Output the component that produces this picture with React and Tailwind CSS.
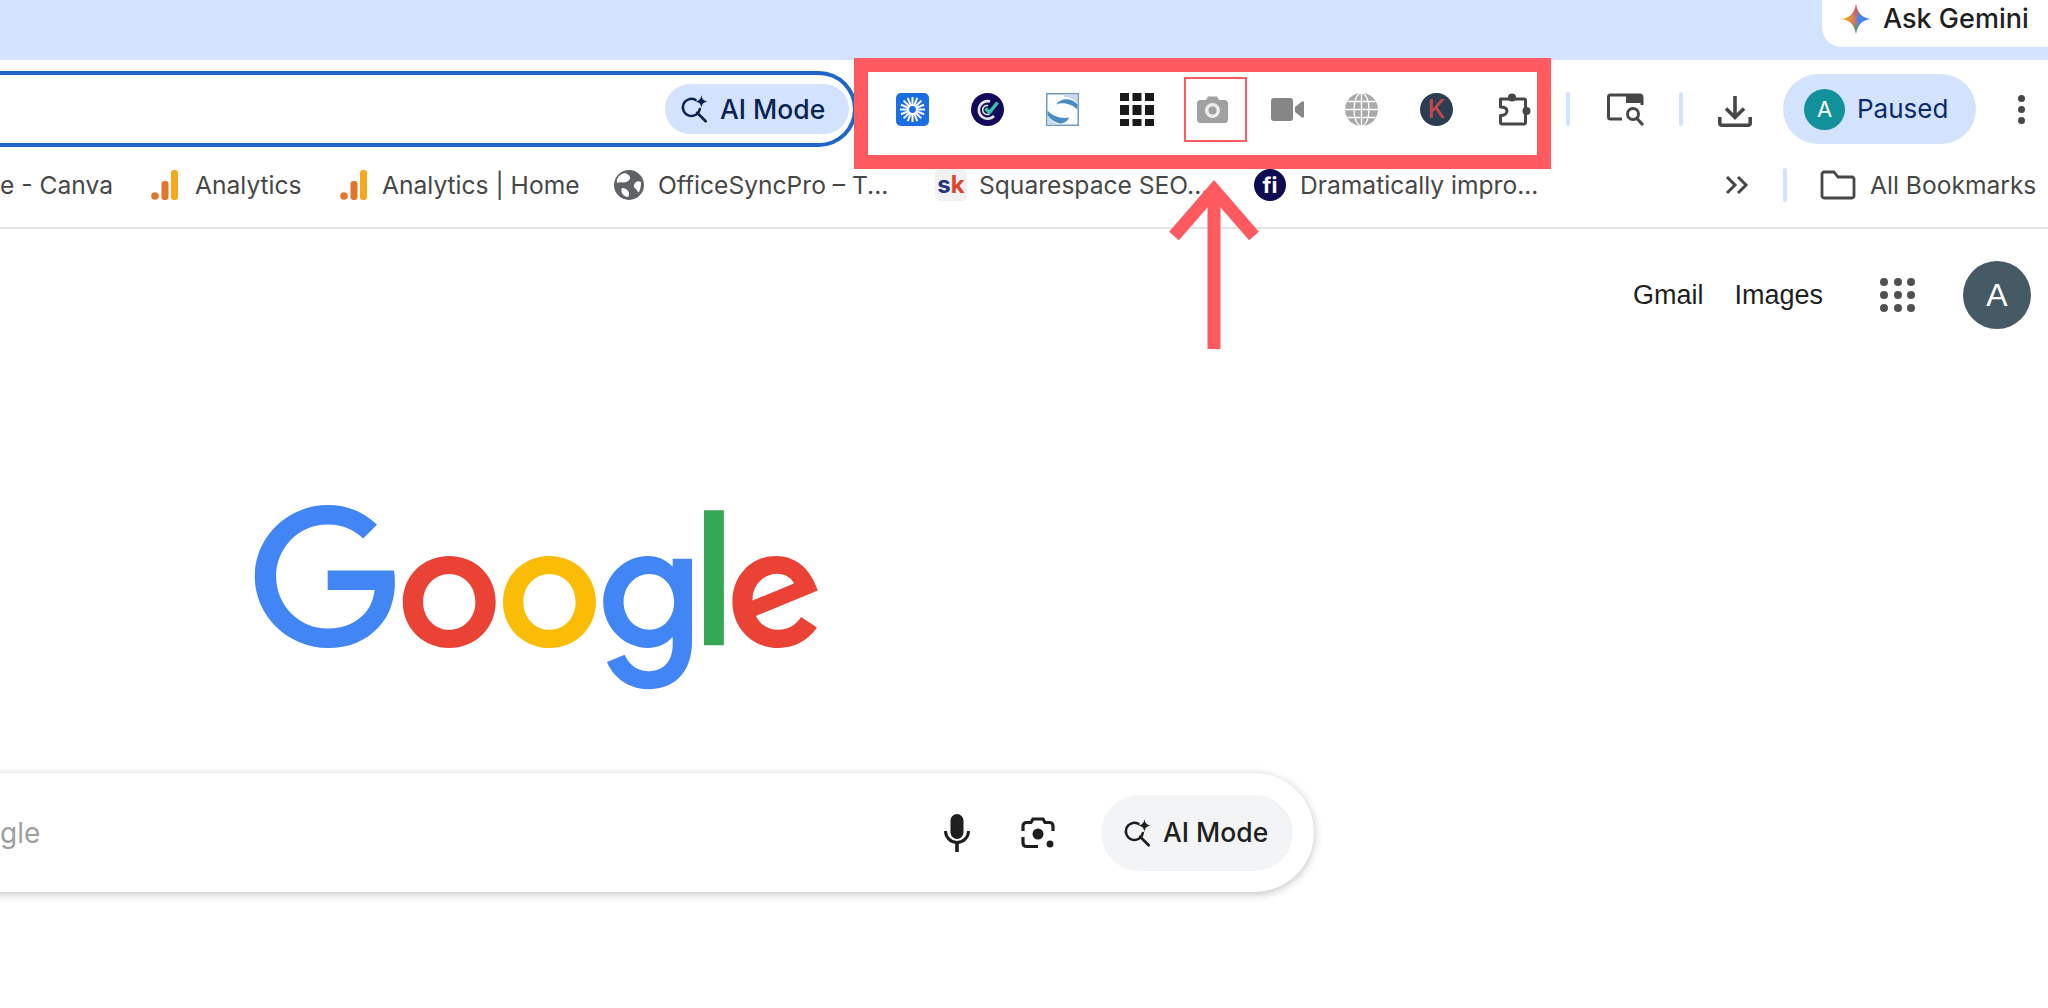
const FONT = "font-['Inter','Liberation_Sans',sans-serif]";

function Sep({ className = "" }) {
  return <div className={`h-[34px] w-[4px] shrink-0 rounded-full bg-[#d3e3fd] ${className}`} />;
}

function GeminiStar() {
  return (
    <svg width="32" height="32" viewBox="0 0 32 32">
      <defs>
        <clipPath id="gemClip">
          <path d="M16 1C16.800 9.500 22.500 15.200 31 16C22.500 16.800 16.800 22.500 16 31C15.200 22.500 9.500 16.800 1 16C9.500 15.200 15.200 9.500 16 1Z" />
        </clipPath>
        <linearGradient id="gemH" x1="0" y1="0" x2="1" y2="0">
          <stop offset="0.1" stopColor="#f5b400" />
          <stop offset="0.45" stopColor="#d9785a" />
          <stop offset="0.6" stopColor="#4285f4" />
        </linearGradient>
        <linearGradient id="gemV" x1="0" y1="0" x2="0" y2="1">
          <stop offset="0.1" stopColor="#e8453c" />
          <stop offset="0.42" stopColor="#e8453c" stopOpacity="0" />
          <stop offset="0.6" stopColor="#34a853" stopOpacity="0" />
          <stop offset="0.9" stopColor="#34a853" />
        </linearGradient>
      </defs>
      <g clipPath="url(#gemClip)">
        <rect width="32" height="32" fill="url(#gemH)" />
        <rect x="10" width="12" height="32" fill="url(#gemV)" />
      </g>
    </svg>
  );
}

function AiSearchIcon({ color, size = 30 }) {
  return (
    <svg width={size} height={size} viewBox="0 0 28 28" fill="none">
      <path d="M14.500 5.500A8 8 0 1 0 18.500 14" stroke={color} strokeWidth="2.300" strokeLinecap="round" />
      <path d="M16 17.500L24 25.500" stroke={color} strokeWidth="2.500" strokeLinecap="round" />
      <path d="M20 1C20.600 5 22 6.400 26 7C22 7.600 20.600 9 20 13C19.400 9 18 7.600 14 7C18 6.400 19.400 5 20 1Z" fill={color} />
    </svg>
  );
}

function Sunburst() {
  const rays = Array.from({ length: 16 }).map((_, i) => (i * 360) / 16);
  return (
    <svg width="33" height="33" viewBox="0 0 33 33">
      <rect width="33" height="33" rx="5" fill="#1a6ee3" />
      {rays.map((a) => (
        <rect key={a} x="15.500" y="4" width="2" height="9" fill="#fff" transform={`rotate(${a} 16.500 16.500)`} />
      ))}
      <circle cx="16.500" cy="16.500" r="5.500" fill="#fff" />
      <circle cx="16.500" cy="16.500" r="3.400" fill="#1a6ee3" />
    </svg>
  );
}

function CheckBadge() {
  return (
    <svg width="33" height="33" viewBox="0 0 33 33" fill="none">
      <circle cx="16.500" cy="16.500" r="16.500" fill="#140a5c" />
      <path d="M19 8.500A8.800 8.800 0 1 0 23 23" stroke="#e8e6f2" strokeWidth="2.600" />
      <path d="M17 12.500A4.500 4.500 0 1 0 18 21" stroke="#e8e6f2" strokeWidth="1.500" />
      <path d="M14.500 15.500L18.500 19.500L26.500 9.500" stroke="#35c4a8" strokeWidth="3.500" />
    </svg>
  );
}

function SLogo() {
  return (
    <svg width="33" height="33" viewBox="0 0 33 33" fill="none">
      <rect x="0.750" y="0.750" width="31.500" height="31.500" fill="#fff" stroke="#6f9bc4" strokeWidth="1.500" />
      <path d="M18 1.500H31.500V11C28 6 23 3.500 18 4Z" fill="#c7d9ea" />
      <path d="M1.500 23C4 27 8 30 13 31.500H1.500Z" fill="#c7d9ea" />
      <path d="M10 11.500C14 5.500 25 3.500 31.500 11.500V16.500C26 11 17 8.500 10 11.500Z" fill="#4a8bc6" />
      <path d="M1.500 17.500C7 23.500 15 26 23 24.500C22 28 18 30.500 14 30.500C9 29.500 4 26 1.500 22Z" fill="#4a8bc6" />
    </svg>
  );
}

function GridIcon() {
  return (
    <svg width="34" height="33" viewBox="0 0 34 33" fill="#1a1a1a">
      {[0, 12.500, 25].map((x) => (
        <g key={x}>
          <rect x={x} y="0" width="9" height="8" />
          <rect x={x} y="12" width="9" height="10" />
          <rect x={x} y="26" width="9" height="7" />
        </g>
      ))}
    </svg>
  );
}

function CameraIcon() {
  return (
    <svg width="31" height="28" viewBox="0 0 31 28">
      <path d="M3 5H9L11 1.500H20L22 5H28C29.500 5 31 6.500 31 8V25C31 26.500 29.500 28 28 28H3C1.500 28 0 26.500 0 25V8C0 6.500 1.500 5 3 5Z" fill="#a0a0a0" />
      <circle cx="15.500" cy="15.500" r="7.500" fill="#ececec" />
      <circle cx="15.500" cy="15.500" r="4" fill="#a0a0a0" />
    </svg>
  );
}

function VideoIcon() {
  return (
    <svg width="33" height="23" viewBox="0 0 33 23" fill="#868686">
      <rect width="22" height="23" rx="3" />
      <path d="M24 9L31 3.500C32 3 33 3.500 33 4.500V18.500C33 19.500 32 20 31 19.500L24 14Z" />
    </svg>
  );
}

function GlobeIcon() {
  return (
    <svg width="33" height="33" viewBox="0 0 33 33" fill="none">
      <circle cx="16.500" cy="16.500" r="16.500" fill="#a9a9a9" />
      <g stroke="#fff" strokeWidth="1.300">
        <ellipse cx="16.500" cy="16.500" rx="7.500" ry="16.500" />
        <path d="M16.500 0V33M0 16.500H33M2.500 8.500H30.500M2.500 24.500H30.500" />
      </g>
    </svg>
  );
}

function PuzzleIcon() {
  return (
    <svg width="34" height="33" viewBox="0 0 34 33" fill="none">
      <circle cx="15" cy="4.500" r="4" fill="#474747" />
      <circle cx="29.500" cy="18" r="4" fill="#474747" />
      <path
        d="M3.500 6H27C28 6 28.500 6.500 28.500 7.500V29.500C28.500 30.500 28 31 27 31H5C4 31 3.500 30.500 3.500 29.500V22.500C8 22.500 10 20 10 18C10 15.500 8 14 3.500 14Z"
        stroke="#474747"
        strokeWidth="3"
        strokeLinejoin="round"
      />
    </svg>
  );
}

function TabSearchIcon() {
  return (
    <svg width="37" height="33" viewBox="0 0 37 33" fill="none">
      <path d="M15 26H3.500C2 26 1.500 25 1.500 24V4C1.500 3 2 2 3.500 2H33C34 2 35 3 35 4V12" stroke="#474747" strokeWidth="3" />
      <rect x="19" y="1" width="16" height="9" fill="#474747" />
      <circle cx="26" cy="21" r="5.500" stroke="#474747" strokeWidth="3" />
      <path d="M30 25.500L35 31" stroke="#474747" strokeWidth="3.200" strokeLinecap="round" />
    </svg>
  );
}

function DownloadIcon() {
  return (
    <svg width="34" height="31" viewBox="0 0 34 31" fill="none">
      <path d="M17 0V20M8 12.500L17 21.500L26 12.500" stroke="#474747" strokeWidth="3.600" />
      <path d="M1.800 21V27C1.800 28.500 2.500 29.200 4 29.200H30C31.500 29.200 32.200 28.500 32.200 27V21" stroke="#474747" strokeWidth="3.600" />
    </svg>
  );
}

function AnalyticsIcon() {
  return (
    <svg width="28" height="30" viewBox="0 0 28 30">
      <rect x="20" y="0" width="7" height="30" rx="3" fill="#f5a91f" />
      <rect x="10.500" y="11" width="7" height="19" rx="3" fill="#e2762a" />
      <circle cx="4" cy="26" r="3.800" fill="#e2762a" />
    </svg>
  );
}

function WorldIcon() {
  return (
    <svg width="30" height="30" viewBox="0 0 30 30">
      <circle cx="15" cy="15" r="15" fill="#5f6368" />
      <path d="M11 3C16 5 18 8 14 11C10 14 6 11 3 13C2 8 6 4 11 3Z" fill="#fff" />
      <path d="M27 12C24 10 21 12 20 15C19 18 23 19 24 22C25 23 27 19 27 12Z" fill="#fff" />
      <path d="M8 18C11 18 15 20 15 24C15 26 14 27 13 27C9 26 6 22 8 18Z" fill="#fff" />
    </svg>
  );
}

function Bookmark({ icon, label, className = "" }) {
  return (
    <div className={`flex shrink-0 items-center ${className}`}>
      {icon}
      <span className="text-[24.600px] leading-none whitespace-nowrap text-[#474747]">{label}</span>
    </div>
  );
}

function GoogleLogo() {
  return (
    <svg width="568" height="191" viewBox="0 0 272 92" preserveAspectRatio="none">
      <path fill="#EA4335" d="M115.75 47.18c0 12.77-9.99 22.18-22.25 22.18s-22.25-9.41-22.25-22.18C71.25 34.32 81.24 25 93.5 25s22.25 9.32 22.25 22.18zm-9.74 0c0-7.98-5.79-13.44-12.51-13.44S80.99 39.2 80.99 47.18c0 7.9 5.79 13.44 12.51 13.44s12.51-5.55 12.51-13.44z" />
      <path fill="#FBBC05" d="M163.75 47.18c0 12.77-9.99 22.18-22.25 22.18s-22.25-9.41-22.25-22.18c0-12.85 9.99-22.18 22.25-22.18s22.25 9.32 22.25 22.18zm-9.74 0c0-7.98-5.79-13.44-12.51-13.44s-12.51 5.46-12.51 13.44c0 7.9 5.79 13.44 12.51 13.44s12.51-5.55 12.51-13.44z" />
      <path fill="#4285F4" d="M209.75 26.34v39.82c0 16.38-9.66 23.07-21.08 23.07-10.75 0-17.22-7.19-19.66-13.07l8.48-3.53c1.51 3.61 5.21 7.87 11.17 7.87 7.31 0 11.84-4.51 11.84-13v-3.19h-.34c-2.18 2.69-6.38 5.04-11.68 5.04-11.09 0-21.25-9.66-21.25-22.09 0-12.52 10.16-22.26 21.25-22.26 5.29 0 9.49 2.35 11.68 4.96h.34v-3.61h9.25zm-8.56 20.92c0-7.81-5.21-13.52-11.84-13.52-6.72 0-12.35 5.71-12.35 13.52 0 7.73 5.63 13.36 12.35 13.36 6.63 0 11.84-5.63 11.84-13.36z" />
      <path fill="#34A853" d="M225 3v65h-9.5V3h9.5z" />
      <path fill="#EA4335" d="M262.02 54.48l7.56 5.04c-2.44 3.61-8.32 9.83-18.48 9.83-12.6 0-22.01-9.74-22.01-22.18 0-13.19 9.49-22.18 20.92-22.18 11.51 0 17.14 9.16 18.98 14.11l1.01 2.52-29.65 12.28c2.27 4.45 5.8 6.72 10.75 6.72 4.96 0 8.4-2.44 10.92-6.14zm-23.27-7.98l19.82-8.23c-1.09-2.77-4.37-4.7-8.23-4.7-4.95 0-11.84 4.37-11.59 12.93z" />
      <path fill="#4285F4" d="M35.29 41.41V32H67c.31 1.64.47 3.58.47 5.68 0 7.06-1.93 15.79-8.15 22.01-6.05 6.3-13.78 9.66-24.02 9.66C16.32 69.35.36 53.89.36 34.91.36 15.93 16.32.47 35.3.47c10.5 0 17.98 4.12 23.6 9.49l-6.64 6.64c-4.03-3.78-9.49-6.72-16.97-6.72-13.86 0-24.7 11.17-24.7 25.03 0 13.86 10.84 25.03 24.7 25.03 8.99 0 14.11-3.61 17.39-6.89 2.66-2.66 4.41-6.46 5.1-11.65l-22.49.01z" />
    </svg>
  );
}

function MicIcon() {
  return (
    <svg width="26" height="38" viewBox="0 0 26 38" fill="none">
      <rect x="6.500" y="0" width="13" height="25" rx="6.500" fill="#1f1f1f" />
      <path d="M1.500 17A11.500 11.500 0 0 0 24.500 17" stroke="#1f1f1f" strokeWidth="3" />
      <path d="M13 28V38" stroke="#1f1f1f" strokeWidth="3.600" />
    </svg>
  );
}

function LensIcon() {
  return (
    <svg width="34" height="34" viewBox="0 0 34 34" fill="none">
      <path d="M2 15V10C2 8 3.500 6.500 5.500 6.500H10L12 3H22L24 6.500H28.500C30.500 6.500 32 8 32 10V15" stroke="#1f1f1f" strokeWidth="3.200" />
      <path d="M2 21V27C2 29 3.500 30.500 5.500 30.500H17" stroke="#1f1f1f" strokeWidth="3.200" />
      <circle cx="17" cy="18" r="5.500" fill="#1f1f1f" />
      <circle cx="29" cy="28" r="3.500" fill="#1f1f1f" />
    </svg>
  );
}

function AppsDots() {
  return (
    <div className="grid grid-cols-3 gap-x-[5.500px] gap-y-[5px]">
      {Array.from({ length: 9 }).map((_, i) => (
        <span key={i} className="h-[8px] w-[8px] rounded-full bg-[#505050]" />
      ))}
    </div>
  );
}

export default function App() {
  return (
    <div className={`relative h-[1008px] w-[2048px] overflow-hidden bg-white ${FONT}`}>
      {/* tab strip */}
      <div className="flex h-[60px] justify-end bg-[#d3e3fd]">
        <div className="flex h-[47px] w-[226px] items-center gap-[11px] rounded-bl-[20px] bg-white pb-[10px] pl-[18px]">
          <GeminiStar />
          <span className="text-[27px] font-medium leading-none whitespace-nowrap text-[#1f1f1f]">Ask Gemini</span>
        </div>
      </div>

      {/* toolbar */}
      <div className="flex h-[98px] items-center">
        <div className="flex h-[76px] w-[857px] shrink-0 items-center justify-end rounded-r-full border-y-[4px] border-r-[4px] border-[#1f66c9] bg-white pr-[4px]">
          <div className="flex h-[50px] w-[184px] items-center gap-[10px] rounded-full bg-[#d3e3fd] pl-[15px]">
            <AiSearchIcon color="#0b2350" />
            <span className="text-[26.500px] font-medium leading-none whitespace-nowrap text-[#0b2350]">AI Mode</span>
          </div>
        </div>

        <div className="ml-[39px] flex items-center">
          <div className="w-[75px] shrink-0"><Sunburst /></div>
          <div className="w-[75px] shrink-0"><CheckBadge /></div>
          <div className="w-[74px] shrink-0"><SLogo /></div>
          <div className="w-[77px] shrink-0"><GridIcon /></div>
          <div className="w-[74px] shrink-0"><CameraIcon /></div>
          <div className="w-[74px] shrink-0"><VideoIcon /></div>
          <div className="w-[75px] shrink-0"><GlobeIcon /></div>
          <div className="flex w-[77px] shrink-0">
            <span className="flex h-[33px] w-[33px] items-center justify-center rounded-full bg-[#2a3d52] text-[26px] font-medium leading-none text-[#c4474d]">K</span>
          </div>
          <PuzzleIcon />
        </div>

        <Sep className="ml-[35px]" />
        <div className="ml-[37px] flex"><TabSearchIcon /></div>
        <Sep className="ml-[35px]" />
        <div className="ml-[35px] mt-[4px] flex"><DownloadIcon /></div>

        <div className="ml-[31px] flex h-[70px] w-[193px] items-center rounded-full bg-[#d3e3fd] pl-[21px]">
          <span className="flex h-[41px] w-[41px] items-center justify-center rounded-full bg-[#12919b] text-[22px] leading-none text-white">A</span>
          <span className="ml-[12px] text-[26px] leading-none text-[#0b2a6b]">Paused</span>
        </div>

        <div className="ml-[42px] flex flex-col gap-[4px]">
          <span className="h-[7px] w-[7px] rounded-full bg-[#474747]" />
          <span className="h-[7px] w-[7px] rounded-full bg-[#474747]" />
          <span className="h-[7px] w-[7px] rounded-full bg-[#474747]" />
        </div>
      </div>

      {/* bookmarks bar */}
      <div className="flex h-[71px] items-center border-b-[2px] border-[#e3e3e3] pb-[15px]">
        <Bookmark label="e - Canva" className="w-[151px]" />
        <Bookmark icon={<AnalyticsIcon />} label="Analytics" className="w-[189px] gap-[16px]" />
        <Bookmark icon={<AnalyticsIcon />} label="Analytics | Home" className="w-[274px] gap-[14px]" />
        <Bookmark icon={<WorldIcon />} label="OfficeSyncPro – T..." className="w-[321px] gap-[14px]" />
        <Bookmark
          icon={
            <span className="flex h-[32px] w-[32px] items-center justify-center rounded-[5px] bg-[#f1f1f1] text-[24px] font-bold leading-none">
              <span className="text-[#27357e]">s</span>
              <span className="text-[#e0442f]">k</span>
            </span>
          }
          label="Squarespace SEO..."
          className="w-[319px] gap-[12px]"
        />
        <Bookmark
          icon={
            <span className="flex h-[32px] w-[32px] items-center justify-center rounded-full bg-[#0d0b52] text-[22px] font-bold leading-none text-white">fi</span>
          }
          label="Dramatically impro..."
          className="w-[471px] gap-[14px]"
        />
        <svg width="24" height="22" viewBox="0 0 24 22" fill="none" stroke="#474747" strokeWidth="3">
          <path d="M2 3L10 11L2 19M13 3L21 11L13 19" />
        </svg>
        <Sep className="ml-[34px]" />
        <svg className="ml-[33px]" width="36" height="30" viewBox="0 0 36 30" fill="none" stroke="#474747" strokeWidth="2.800">
          <path d="M2 4C2 3 3 2 4 2H14L18 7H32C33 7 34 8 34 9V26C34 27 33 28 32 28H4C3 28 2 27 2 26Z" />
        </svg>
        <span className="ml-[14px] text-[24.600px] leading-none whitespace-nowrap text-[#474747]">All Bookmarks</span>
      </div>

      {/* google page header */}
      <div className="flex h-[132px] items-center justify-end pr-[17px] font-['Liberation_Sans',sans-serif]">
        <span className="text-[27px] leading-none text-[#1f1f1f]">Gmail</span>
        <span className="ml-[31px] text-[27px] leading-none text-[#1f1f1f]">Images</span>
        <div className="ml-[57px]"><AppsDots /></div>
        <span className="ml-[48px] flex h-[68px] w-[68px] items-center justify-center rounded-full bg-[#455a64] text-[32px] leading-none text-white">A</span>
      </div>

      <div className="ml-[254px] mt-[143px]">
        <GoogleLogo />
      </div>

      {/* search box runs off the left edge */}
      <div className="ml-[-100px] mt-[78px] flex h-[119px] w-[1414px] items-center rounded-[60px] bg-white pl-[100px] pr-[21px] shadow-[0_2px_8px_rgba(32,33,36,0.28)]">
        <span className="text-[28px] leading-none text-[#a0a0a0]">gle</span>
        <div className="ml-auto flex items-center">
          <MicIcon />
          <div className="ml-[51px]"><LensIcon /></div>
          <div className="ml-[46px] flex h-[76px] w-[192px] items-center gap-[10px] rounded-full bg-[#f3f4f6] pl-[22px]">
            <AiSearchIcon color="#1f1f1f" />
            <span className="text-[26.500px] font-medium leading-none whitespace-nowrap text-[#1f1f1f]">AI Mode</span>
          </div>
        </div>
      </div>

      {/* red annotation */}
      <div className="absolute left-[854px] top-[58px] h-[111px] w-[697px] border-[14px] border-[#ff5a5f]" />
      <div className="absolute left-[1184px] top-[77px] h-[65px] w-[63px] border-[2px] border-[#ff5a5f]" />
      <svg className="absolute left-[1160px] top-[180px]" width="110" height="172" viewBox="0 0 110 172" fill="none" stroke="#ff5a5f" strokeWidth="13">
        <path d="M54 8V169" />
        <path d="M14 56L54 10L94 56" />
      </svg>
    </div>
  );
}
